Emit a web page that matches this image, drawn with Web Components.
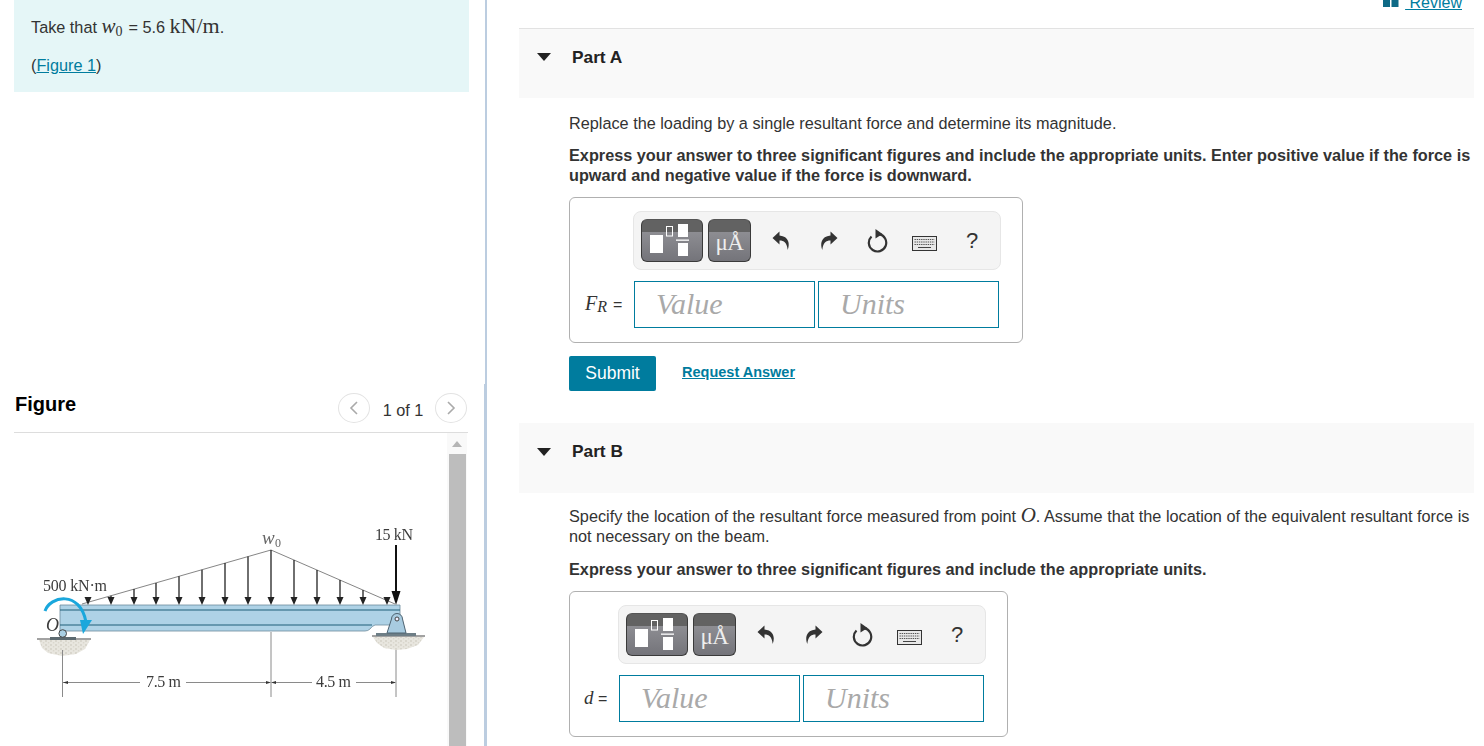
<!DOCTYPE html>
<html lang="en"><head><meta charset="utf-8"><title>Mastering problem</title>
<style>
html,body{margin:0;padding:0;background:#fff}
body{width:1484px;height:746px;overflow:hidden;font:16.25px/20px "Liberation Sans",Arial,sans-serif;color:#333}
</style></head><body>
<hw-app></hw-app>
<template id="t-app"><style>
:host{display:flex;width:1484px;height:746px;overflow:hidden}
.left{width:484px;flex:none;display:flex;flex-direction:column}
.sep{width:3px;flex:none;display:flex;flex-direction:column}
.sep i{display:block;background:#bccde0}
.sep .a{height:384px;margin-left:1px}
.sep .b{flex:1}
.right{width:955px;flex:none;margin-left:32px;display:flex;flex-direction:column}
hw-part+hw-part{margin-top:32px}
.lb{display:inline-block;white-space:nowrap}
</style>
<div class="left"><hw-note></hw-note><hw-figure></hw-figure></div>
<div class="sep"><i class="a"></i><i class="b"></i></div>
<div class="right"><hw-review></hw-review>
<hw-part name="Part A" bordered>
  <p style="margin-bottom:12px">Replace the loading by a single resultant force and determine its magnitude.</p>
  <p style="margin-bottom:12px"><b>Express your answer to three significant figures and include the appropriate units. Enter positive value if the force is upward and negative value if the force is downward.</b></p>
  <hw-answer><span slot="label" class="lb" style="width:38px"><i style="font:italic 20px 'Liberation Serif',serif">F</i><i style="font:italic 16px/10px 'Liberation Serif',serif;position:relative;top:2px;margin-right:6px">R</i><span style="font-size:16px">=</span></span></hw-answer>
  <hw-actions></hw-actions>
</hw-part>
<hw-part name="Part B" tight>
  <p style="margin-bottom:13px">Specify the location of the resultant force measured from point <i style="font:italic 21px/18px 'Liberation Serif',serif">O</i>. Assume that the location of the equivalent resultant force is not necessary on the beam.</p>
  <p style="margin-bottom:12px"><b>Express your answer to three significant figures and include the appropriate units.</b></p>
  <hw-answer><span slot="label" class="lb" style="width:23px"><i style="font:italic 19px 'Liberation Serif',serif;margin-left:-1px">d</i> <span style="font-size:16px">=</span></span></hw-answer>
</hw-part>
</div></template>

<template id="t-note"><style>
:host{display:block;box-sizing:border-box;width:455px;height:92px;margin-left:14px;padding:0 15px 0 17px;background:#e5f6f7;color:#333;line-height:20px}
p{margin:0}.a{padding-top:17px;white-space:nowrap}.b{padding-top:18px}
.s{font-family:"Liberation Serif",serif}
.w{font-style:italic;font-size:21px;line-height:10px}
sub{font-size:14px;line-height:0;vertical-align:-3px;margin-right:6px}
.u{font-size:22px;line-height:10px}
a{color:#007c9e;text-decoration:underline}
</style>
<p class="a">Take that <span class="s w">w</span><sub class="s">0</sub>= 5.6 <span class="s u">kN/m</span>.</p>
<p class="b">(<a href="#">Figure 1</a>)</p></template>

<template id="t-figure"><style>
:host{display:flex;flex-direction:column;width:454px;margin:300px 0 0 14px;flex:1;min-height:0}
.h{height:40px;flex:none;display:flex;align-items:flex-start;border-bottom:1px solid #ddd}
h2{margin:2px 0 0 1px;font:bold 20px/20px "Liberation Sans",Arial,sans-serif;color:#000;flex:1}
.nav{width:32px;height:30px;box-sizing:border-box;border:1px solid #e3e3e3;border-radius:50%;display:grid;place-items:center;margin-top:1px}
.n{width:64px;padding:8px 0 0 1px;text-align:center;color:#333}
.last{margin-right:1px}
.nav svg{display:block}
.b{display:flex;flex:1;min-height:0}
svg.d{display:block;flex:none;width:433px;height:313px;filter:blur(.45px)}
.sb{width:20px;flex:none;background:#f9f9f9;display:flex;flex-direction:column;align-items:center}
.up{width:0;height:0;border:5px solid transparent;border-top:0;border-bottom:6px solid #b5b5b5;margin-top:8px}
.th{width:17px;flex:1;background:#bdbdbd;margin-top:7px}
text{font-family:"Liberation Serif",serif;fill:#3c3c3c}
</style>
<div class="h"><h2>Figure</h2>
<div class="nav"><svg width="10" height="16" viewBox="0 0 10 16"><path d="M8 2 2 8l6 6" fill="none" stroke="#aaa" stroke-width="1.6"/></svg></div>
<div class="n">1 of 1</div>
<div class="nav last"><svg width="10" height="16" viewBox="0 0 10 16"><path d="M2 2l6 6-6 6" fill="none" stroke="#aaa" stroke-width="1.6"/></svg></div>
</div>
<div class="b">
<svg class="d" viewBox="14 433 433 313">
  <defs><pattern id="sp" width="5" height="4" patternUnits="userSpaceOnUse"><rect width="5" height="4" fill="#e8e6df"/><circle cx="1" cy="1" r=".9" fill="#d2cfc4"/><circle cx="3.600" cy="2.800" r=".8" fill="#d9d6cb"/></pattern></defs>
  <path d="M39 640H90L85 649 76 654 62 656 48 653 42 648Z" fill="url(#sp)"/>
  <path d="M373 637H424L418 645 407 649 396 650 384 648 377 643Z" fill="url(#sp)"/>
  <path d="M60 605H400V625H375Q372 626 370 629Q368 631 365 631H60Z" fill="#aed2e6" stroke="#6d8c9c" stroke-width=".8"/>
  <path d="M60 610H400M60 625H372" stroke="#1e5f78" stroke-width="1.2" fill="none"/>
  <path d="M82 604 271 550 395 604" fill="none" stroke="#777" stroke-width=".9"/>
  <g id="ar" stroke="#222" stroke-width="1.3" fill="#222"></g>
  <path d="M396 545V594" stroke="#111" stroke-width="2"/><path d="M391.500 591H400.500L396 605Z" fill="#111"/>
  <path d="M37 639H91" stroke="#444" stroke-width="1"/><rect x="50" y="637" width="26" height="3" fill="#5d6a70"/>
  <circle cx="62.700" cy="633.500" r="3.800" fill="#a9cfe3" stroke="#444"/>
  <path d="M372 636H425" stroke="#444"/><rect x="376" y="633" width="40" height="3" fill="#6e7e86"/>
  <path d="M387 633 391.500 619a5.500 5.500 0 0 1 11 0L406 633Z" fill="#a8cbe0" stroke="#4d6270"/><circle cx="397" cy="619" r="2" fill="#eef" stroke="#444"/>
  <path d="M45 611C50 596 80 590 86 622" fill="none" stroke="#1aa7dc" stroke-width="3"/><path d="M80 620H92L83 634Z" fill="#1aa7dc"/>
  <path d="M62.500 650V697M271 632V697M396 650V697M63 682.500H140M186 682.500H266M275 682.500H312M356 682.500H395" stroke="#8a8a8a" stroke-width="1" fill="none"/>
  <path d="M63 682.500l5-1.600v3.200ZM271 682.500l-5-1.600v3.200ZM271 682.500l5-1.600v3.200ZM396 682.500l-5-1.600v3.200Z" fill="#333"/>
  <text x="43" y="591" font-size="16" textLength="64">500 kN·m</text>
  <text x="375" y="540" font-size="16" textLength="38">15 kN</text>
  <text x="262" y="544" font-size="19" font-style="italic" style="fill:#666">w</text><text x="275" y="547" font-size="12" style="fill:#666">0</text>
  <text x="46" y="631" font-size="18" font-style="italic">O</text>
  <text x="146" y="687" font-size="16" textLength="35">7.5 m</text>
  <text x="316" y="687" font-size="16" textLength="35">4.5 m</text>
</svg>
<div class="sb"><div class="up"></div><div class="th"></div></div>
</div></template>

<template id="t-review"><style>
:host{display:flex;justify-content:flex-end;align-items:flex-start;height:28px;padding-right:12px;flex:none;font-size:16px}
.w{display:flex;margin-top:-7px}
svg{display:block;margin:0 6px 0 0}
a{color:#007c9e;text-decoration:underline;white-space:pre}
</style><div class="w"><svg width="16" height="14" viewBox="0 0 16 14"><path d="M0 0H7V14H0ZM8.500 0H15.500V14H8.500Z" fill="#0e6a86"/></svg><a href="#"> Review</a></div></template>

<template id="t-part"><style>
:host{display:block;flex:none}
.h{height:70px;box-sizing:border-box;background:#f9f9f9;display:flex;align-items:flex-start;padding:18px 0 0 18px}
:host([bordered]) .h{border-top:1px solid #e2e2e2}
.tri{width:0;height:0;border:7px solid transparent;border-top:8px solid #222;border-bottom:0;margin-top:7px}
:host([bordered]) .tri{margin-top:6px}
h3{margin:0 0 0 21px;font:bold 17.300px/20px "Liberation Sans",Arial,sans-serif;color:#222}
.c{padding:15px 0 0 50px}
:host([tight]) .c{padding-top:13px}
::slotted(p){margin:0;color:#333}
</style><div class="h"><span class="tri"></span><h3></h3></div><div class="c"><slot></slot></div></template>

<template id="t-answer"><style>
:host{display:inline-grid;grid-template-columns:auto auto;column-gap:10px;align-items:center;border:1px solid #b0b0b0;border-radius:6px;padding:13px 21px 14px 15px;font:16px/20px "Liberation Sans",Arial,sans-serif;color:#333;vertical-align:top}
hw-toolbar{grid-column:2}
.l{white-space:nowrap}
.in{display:flex;gap:3px;margin:11px 2px 0 1px}
.f{width:181px;height:47px;box-sizing:border-box;border:1px solid #007c9e;font:italic 30px/43px "Liberation Serif",serif;color:#a9a9a9;padding-left:21px}
</style><hw-toolbar></hw-toolbar><div class="l" style="margin-top:9px"><slot name="label"></slot></div>
<div class="in"><div class="f">Value</div><div class="f">Units</div></div></template>

<template id="t-toolbar"><style>
:host{display:flex;box-sizing:border-box;width:368px;height:59px;background:#f4f4f4;border:1px solid #e6e6e6;border-radius:8px;align-items:flex-start}
.btn{height:43px;margin-top:7px;box-sizing:border-box;border:1px solid #3a3a3a;border-top-color:#555;border-radius:6px;background:linear-gradient(#626262 0,#626262 30%,#8d8d92 30%,#74747a 100%);flex:none;overflow:hidden}
.t{width:62px;margin-left:7px}
.mu{width:43px;margin-left:5px;color:#eee;font:23px/20px "Liberation Serif",serif;text-align:center;padding-top:13px;white-space:nowrap;letter-spacing:-.5px}
.t svg{display:block}
.i{flex:none;display:block}
.q{font:22px/26px "Liberation Sans",Arial,sans-serif;color:#333;flex:none}
</style>
<div class="btn t"><svg width="60" height="41" viewBox="0 0 60 41"><rect x="8" y="15" width="13" height="18" fill="#fff"/><rect x="24.500" y="6.500" width="6" height="9.500" fill="none" stroke="#fff"/><rect x="36" y="4" width="10" height="13" fill="#fff"/><rect x="34" y="19.500" width="13" height="1.300" fill="#fff"/><rect x="36" y="23" width="10" height="13" fill="#fff"/></svg></div>
<div class="btn mu">μÅ</div>
<svg class="i" style="margin:19px 0 0 21px" width="18" height="20" viewBox="0 0 18 20"><path d="M7.500.5 .5 7l7 6.500V9.600c4.500 0 7.500 2.200 8.200 9.400 2.300-6 1.500-13.500-8.200-14.500Z" fill="#333"/></svg>
<svg class="i" style="margin:19px 0 0 30px;transform:scaleX(-1)" width="18" height="20" viewBox="0 0 18 20"><path d="M7.500.5 .5 7l7 6.500V9.600c4.500 0 7.500 2.200 8.200 9.400 2.300-6 1.500-13.500-8.200-14.500Z" fill="#333"/></svg>
<svg class="i" style="margin:17px 0 0 29px" width="22" height="24" viewBox="0 0 22 24"><path d="M4.500 7.500A8.700 8.700 0 1 0 12 5.200" fill="none" stroke="#333" stroke-width="2.200"/><path d="M8.500 0v9.500L15.500 5Z" fill="#333"/></svg>
<svg class="i" style="margin:24px 0 0 23px" width="25" height="15" viewBox="0 0 25 15"><rect x=".5" y=".5" width="24" height="14" fill="#e8e8e8" stroke="#333"/><path d="M2.500 3.500h20M2.500 6h20M2.500 8.500h20" stroke="#555" stroke-dasharray="1.400 .8"/><path d="M6 11.500h13" stroke="#444"/></svg>
<div class="q" style="margin:16px 0 0 29px">?</div></template>

<template id="t-actions"><style>
:host{display:flex;align-items:center;margin-top:13px;height:35px}
.s{width:87px;height:33px;padding-bottom:2px;background:#007c9e;color:#fff;border-radius:2px;display:grid;place-items:center;font:17.500px/20px "Liberation Sans",Arial,sans-serif}
a{margin-left:26px;color:#007c9e;font:bold 14.500px/20px "Liberation Sans",Arial,sans-serif;text-decoration:underline;position:relative;top:-2px}
</style><div class="s">Submit</div><a href="#">Request Answer</a></template>

<script>
const def=(tag,id,init)=>customElements.define(tag,class extends HTMLElement{
  constructor(){super();const r=this.attachShadow({mode:"open"});r.appendChild(document.getElementById(id).content.cloneNode(true));if(init)init(r,this);}
});
def("hw-note","t-note");
def("hw-figure","t-figure",r=>{
  const g=r.getElementById("ar");let s="";
  const xs=[88,111,134,156,179,202,225,248,271,294,317,340,363,387];
  xs.forEach(x=>{const top=x<=271?604-(x-82)*54/189:550+(x-271)*54/124;
    s+=`<path d="M${x} ${top.toFixed(1)}V598" fill="none"/><path d="M${x-3.5} 597H${x+3.5}L${x} 605Z" stroke="none"/>`;});
  g.innerHTML=s;
});
def("hw-review","t-review");
customElements.define("hw-part",class extends HTMLElement{
  constructor(){super();const r=this.attachShadow({mode:"open"});r.appendChild(document.getElementById("t-part").content.cloneNode(true));r.querySelector("h3").textContent=this.getAttribute("name");}
});
def("hw-toolbar","t-toolbar");
def("hw-answer","t-answer");
def("hw-actions","t-actions");
def("hw-app","t-app");
</script>
</body></html>
